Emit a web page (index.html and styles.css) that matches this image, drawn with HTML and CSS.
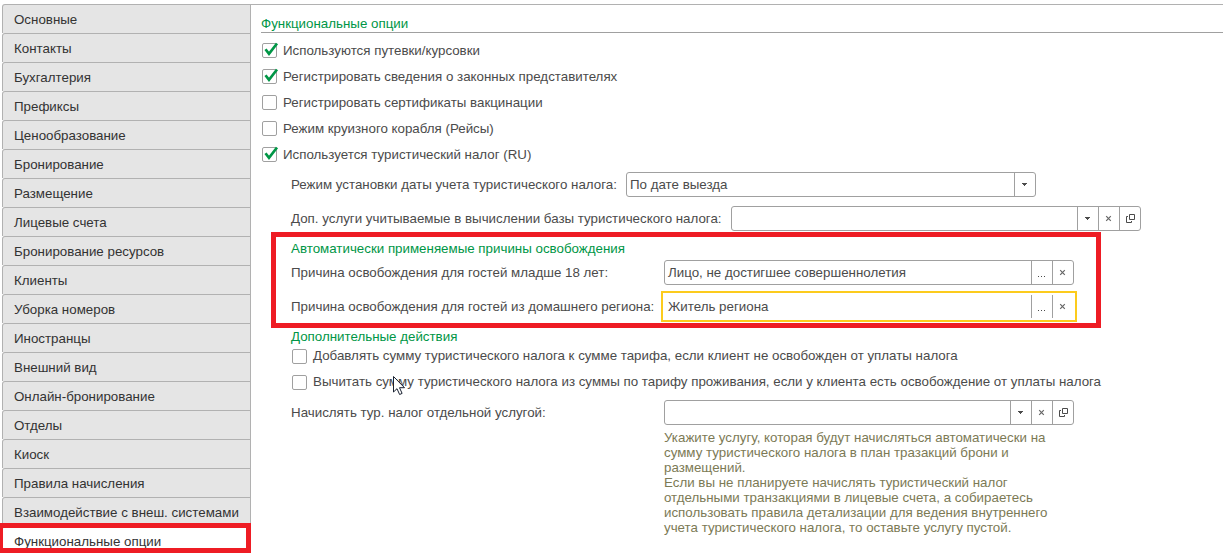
FILE: index.html
```html
<!DOCTYPE html>
<html lang="ru">
<head>
<meta charset="utf-8">
<title>Функциональные опции</title>
<link rel="stylesheet" href="styles.css">
</head>
<body>
<svg class="defs" width="0" height="0">
  <symbol id="tick" viewBox="0 0 17 17"><path d="M3.500 7.200 7 11.800 15 1.500" fill="none" stroke="#009646" stroke-width="2.7"/></symbol>
  <symbol id="down" viewBox="0 0 20 23"><path d="M7 10h5v1h-1v1h-1v1h-1v-1h-1v-1h-1z" fill="#4b4b4b"/></symbol>
  <symbol id="clear" viewBox="0 0 20 23"><path d="M7.200 9.200 11.800 13.800M11.800 9.200 7.200 13.800" fill="none" stroke="#666" stroke-width="1.200"/></symbol>
  <symbol id="open" viewBox="0 0 20 23"><path d="M9.500 7.500h5v5h-5zM8 9.500H6.500v6h5V14" fill="none" stroke="#4b4b4b"/></symbol>
  <symbol id="dots" viewBox="0 0 20 23"><path d="M6 15h1v1H6zM9 15h1v1H9zM12 15h1v1h-1z" fill="#4b4b4b"/></symbol>
</svg>
<div class="window">
  <nav class="tabs">
    <div class="tab"><span>Основные</span></div>
    <div class="tab"><span>Контакты</span></div>
    <div class="tab"><span>Бухгалтерия</span></div>
    <div class="tab"><span>Префиксы</span></div>
    <div class="tab"><span>Ценообразование</span></div>
    <div class="tab"><span>Бронирование</span></div>
    <div class="tab"><span>Размещение</span></div>
    <div class="tab"><span>Лицевые счета</span></div>
    <div class="tab"><span>Бронирование ресурсов</span></div>
    <div class="tab"><span>Клиенты</span></div>
    <div class="tab"><span>Уборка номеров</span></div>
    <div class="tab"><span>Иностранцы</span></div>
    <div class="tab"><span>Внешний вид</span></div>
    <div class="tab"><span>Онлайн-бронирование</span></div>
    <div class="tab"><span>Отделы</span></div>
    <div class="tab"><span>Киоск</span></div>
    <div class="tab"><span>Правила начисления</span></div>
    <div class="tab"><span>Взаимодействие с внеш. системами</span></div>
    <div class="tab active"><span>Функциональные опции</span></div>
  </nav>
  <main class="page">
    <h1 class="title"><span>Функциональные опции</span></h1>
    <div class="checks">
      <div class="check"><i class="box"><svg class="tick"><use href="#tick"/></svg></i><span>Используются путевки/курсовки</span></div>
      <div class="check"><i class="box"><svg class="tick"><use href="#tick"/></svg></i><span>Регистрировать сведения о законных представителях</span></div>
      <div class="check"><i class="box"></i><span>Регистрировать сертификаты вакцинации</span></div>
      <div class="check"><i class="box"></i><span>Режим круизного корабля (Рейсы)</span></div>
      <div class="check"><i class="box"><svg class="tick"><use href="#tick"/></svg></i><span>Используется туристический налог (RU)</span></div>
    </div>
    <div class="group">
      <div class="row date-row">
        <div class="label"><span>Режим установки даты учета туристического налога:</span></div>
        <div class="field"><div class="value"><span>По дате выезда</span></div><svg class="btn"><use href="#down"/></svg></div>
      </div>
      <div class="row services-row">
        <div class="label"><span>Доп. услуги учитываемые в вычислении базы туристического налога:</span></div>
        <div class="field"><div class="value"></div><svg class="btn"><use href="#down"/></svg><svg class="btn"><use href="#clear"/></svg><svg class="btn"><use href="#open"/></svg></div>
      </div>
      <h2 class="subtitle auto"><span>Автоматически применяемые причины освобождения</span></h2>
      <div class="row reason-row">
        <div class="label"><span>Причина освобождения для гостей младше 18 лет:</span></div>
        <div class="field"><div class="value"><span>Лицо, не достигшее совершеннолетия</span></div><svg class="btn"><use href="#dots"/></svg><svg class="btn"><use href="#clear"/></svg></div>
      </div>
      <div class="row reason-row">
        <div class="label"><span>Причина освобождения для гостей из домашнего региона:</span></div>
        <div class="field focused"><div class="value"><span>Житель региона</span></div><svg class="btn"><use href="#dots"/></svg><svg class="btn"><use href="#clear"/></svg></div>
      </div>
      <h2 class="subtitle extra"><span>Дополнительные действия</span></h2>
      <div class="check"><i class="box"></i><span>Добавлять сумму туристического налога к сумме тарифа, если клиент не освобожден от уплаты налога</span></div>
      <div class="check"><i class="box"></i><span>Вычитать сумму туристического налога из суммы по тарифу проживания, если у клиента есть освобождение от уплаты налога</span></div>
      <div class="row charge-row">
        <div class="label"><span>Начислять тур. налог отдельной услугой:</span></div>
        <div class="field"><div class="value"></div><svg class="btn"><use href="#down"/></svg><svg class="btn"><use href="#clear"/></svg><svg class="btn"><use href="#open"/></svg></div>
      </div>
      <p class="hint"><span>Укажите услугу, которая будут начисляться автоматически на</span><br><span>сумму туристического налога в план тразакций брони и</span><br><span>размещений.</span><br><span>Если вы не планируете начислять туристический налог</span><br><span>отдельными транзакциями в лицевые счета, а собираетесь</span><br><span>использовать правила детализации для ведения внутреннего</span><br><span>учета туристического налога, то оставьте услугу пустой.</span></p>
    </div>
  </main>
</div>
<div class="mark mark-reasons"></div>
<div class="mark mark-tab"></div>
<svg class="cursor" viewBox="0 0 13 20"><path d="M.5.500v15.500l3.500-3.300 2.600 5.800 2.500-1.100-2.600-5.700h5z" fill="#fff" stroke="#182030"/></svg>
</body>
</html>
```
FILE: styles.css
```css
* { box-sizing: border-box; }
body {
  margin: 0;
  width: 1223px;
  height: 553px;
  overflow: hidden;
  position: relative;
  background: #fff;
  color: #4b4b4b;
  font: 13.333px/15px "Liberation Sans", Arial, sans-serif;
  white-space: nowrap;
}
.defs { position: absolute; }
.window { display: flex; padding: 4px 0 0 2px; }
.tabs { width: 249px; flex: none; }
.tab {
  height: 29px;
  padding: 7px 0 0 11px;
  background: #e5e5e5;
  border: solid #b1b1b1;
  border-width: 1px 1px 0 1px;
  border-top-left-radius: 3px;
  color: #333;
}
.tab.active { background: #fff; border-right-color: #fff; }
.page { flex: 1; border-top: 1px solid #b1b1b1; padding: 11px 0 0 10px; }
h1, h2 { margin: 0; font-size: inherit; font-weight: normal; color: #009646; }
.title { height: 17px; border-bottom: 1px solid #a0a0a0; }
.checks { padding: 10px 0 0 1px; }
.check { display: flex; height: 26px; gap: 6px; }
.box {
  width: 15px;
  height: 15px;
  flex: none;
  border: 1px solid #a0a0a0;
  border-radius: 2px;
  background: #fff;
}
.tick { display: block; width: 17px; height: 17px; margin: -2px 0 0 -1px; }
.group { padding-left: 30px; }
.checks + .group { margin-top: -1px; }
.row { display: flex; height: 34px; align-items: flex-start; }
.label { padding-top: 5px; flex: none; }
.date-row .label { width: 335px; }
.services-row .label { width: 440px; }
.reason-row .label, .charge-row .label { width: 373px; }
.field {
  display: flex;
  width: 410px;
  height: 25px;
  border: 1px solid #a0a0a0;
  border-radius: 3px;
}
.value { flex: 1; padding: 4px 0 0 3px; }
.btn { width: 21px; height: 23px; border-left: 1px solid #a0a0a0; }
.focused {
  width: 416px;
  height: 31px;
  margin: -3px 0 0 -3px;
  padding: 2px;
  border: 2px solid #fccb1d;
  border-radius: 0;
}
.focused .value { padding: 4px 0 0 3px; }
.auto { padding-top: 1px; height: 20px; }
.extra { height: 21px; padding-top: 1px; }
.group > .check { padding-left: 1px; }
.group > .check > span { margin-top: -1px; }
.charge-row { height: 30px; margin-top: -1px; }
.hint { margin: 0 0 0 373px; color: #7c7a55; }
.mark { position: absolute; border: 5px solid #ee1c24; }
.mark-reasons { left: 271px; top: 232px; width: 830px; height: 96px; }
.mark-tab { left: 0; top: 523px; width: 251px; height: 30px; border-left-width: 3px; }
.cursor { position: absolute; left: 393px; top: 376px; width: 13px; height: 20px; }
```
